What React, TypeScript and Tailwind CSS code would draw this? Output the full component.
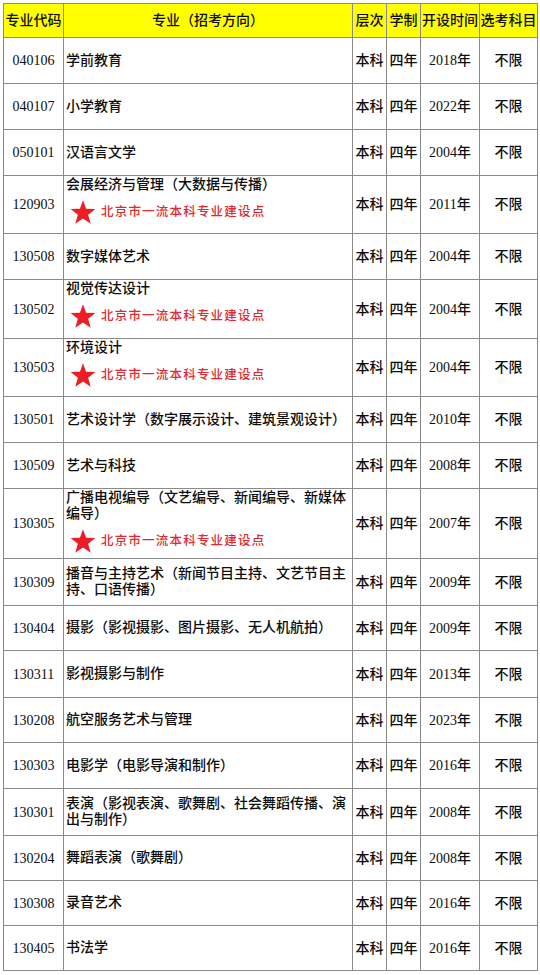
import React from 'react';

type Row = {
  code: string;
  name: string;
  year: string;
  star?: boolean;
  h: string;
};

const rows: Row[] = [
  { code: '040106', name: '学前教育', year: '2018', h: 'h-[46px]' },
  { code: '040107', name: '小学教育', year: '2022', h: 'h-[46px]' },
  { code: '050101', name: '汉语言文学', year: '2004', h: 'h-[46px]' },
  { code: '120903', name: '会展经济与管理（大数据与传播）', year: '2011', star: true, h: 'h-[58px]' },
  { code: '130508', name: '数字媒体艺术', year: '2004', h: 'h-[46px]' },
  { code: '130502', name: '视觉传达设计', year: '2004', star: true, h: 'h-[59px]' },
  { code: '130503', name: '环境设计', year: '2004', star: true, h: 'h-[58px]' },
  { code: '130501', name: '艺术设计学（数字展示设计、建筑景观设计）', year: '2010', h: 'h-[46px]' },
  { code: '130509', name: '艺术与科技', year: '2008', h: 'h-[46px]' },
  { code: '130305', name: '广播电视编导（文艺编导、新闻编导、新媒体编导）', year: '2007', star: true, h: 'h-[70px]' },
  { code: '130309', name: '播音与主持艺术（新闻节目主持、文艺节目主持、口语传播）', year: '2009', h: 'h-[47px]' },
  { code: '130404', name: '摄影（影视摄影、图片摄影、无人机航拍）', year: '2009', h: 'h-[45px]' },
  { code: '130311', name: '影视摄影与制作', year: '2013', h: 'h-[47px]' },
  { code: '130208', name: '航空服务艺术与管理', year: '2023', h: 'h-[45px]' },
  { code: '130303', name: '电影学（电影导演和制作）', year: '2016', h: 'h-[46px]' },
  { code: '130301', name: '表演（影视表演、歌舞剧、社会舞蹈传播、演出与制作）', year: '2008', h: 'h-[47px]' },
  { code: '130204', name: '舞蹈表演（歌舞剧）', year: '2008', h: 'h-[45px]' },
  { code: '130308', name: '录音艺术', year: '2016', h: 'h-[45px]' },
  { code: '130405', name: '书法学', year: '2016', h: 'h-[44px]' },
];

const grid = 'grid grid-cols-[60px_289px_34px_34px_59px_57px]';
const cell = 'flex items-center justify-center border-r border-[#8a8a8a] whitespace-nowrap';

function Star() {
  return (
    <svg width="26" height="24" viewBox="0 0 24 22.5" className="shrink-0">
      <polygon
        points="12,0.3 14.9,8.3 23.6,8.5 16.8,13.8 19.2,22.2 12,17.3 4.8,22.2 7.2,13.8 0.4,8.5 9.1,8.3"
        fill="#ee1c25"
      />
    </svg>
  );
}

export default function App() {
  return (
    <div className="w-[540px] h-[975px] bg-white pt-[3px] pl-[3px] text-[14px] font-medium text-[#0d0d0d] font-['Liberation_Serif','Noto_Sans_CJK_SC',serif]">
      <div className="w-[535px] border border-[#8a8a8a]">
        {/* 表头 */}
        <div className={`${grid} h-[34px] bg-[#ffff00] border-b border-[#8a8a8a]`}>
          <div className={cell}>专业代码</div>
          <div className={cell}>专业（招考方向）</div>
          <div className={cell}>层次</div>
          <div className={cell}>学制</div>
          <div className={cell}>开设时间</div>
          <div className="flex items-center justify-center whitespace-nowrap">选考科目</div>
        </div>

        {rows.map((r, i) => (
          <div
            key={r.code}
            className={`${grid} ${r.h} ${i < rows.length - 1 ? 'border-b border-[#8a8a8a]' : ''}`}
          >
            <div className={cell}>{r.code}</div>
            {r.star ? (
              <div className="flex flex-col border-r border-[#8a8a8a] pl-[2px] pt-[1px]">
                <div className="leading-[16px]">{r.name}</div>
                <div className="flex items-center h-[24px] mt-[7px] ml-[4px]">
                  <Star />
                  <span className="ml-[5px] text-[12.5px] tracking-[1.2px] text-[#e02a30]">
                    北京市一流本科专业建设点
                  </span>
                </div>
              </div>
            ) : (
              <div className="flex items-center border-r border-[#8a8a8a] pl-[2px] leading-[16px]">
                <div>{r.name}</div>
              </div>
            )}
            <div className={cell}>本科</div>
            <div className={cell}>四年</div>
            <div className={cell}>{r.year}年</div>
            <div className="flex items-center justify-center">不限</div>
          </div>
        ))}
      </div>
    </div>
  );
}
